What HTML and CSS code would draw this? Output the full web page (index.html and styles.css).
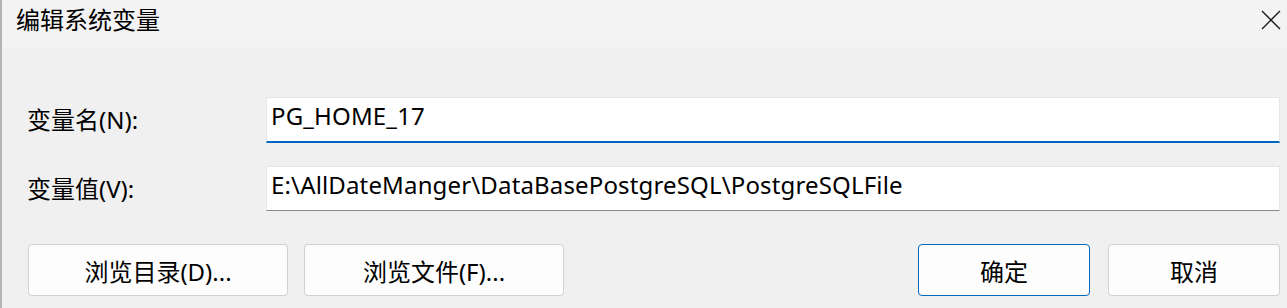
FILE: index.html
```html
<!DOCTYPE html>
<html lang="zh-CN">
<head>
    <meta charset="UTF-8">
    <meta name="viewport" content="width=device-width, initial-scale=1.0">
    <title>编辑系统变量</title>
    <link rel="stylesheet" href="styles.css">
</head>
<body>
    <div class="window">
        <div class="titlebar">
            <span class="title">编辑系统变量</span>
            <svg class="close" width="20" height="20" viewBox="0 0 20 20">
                <path d="M1 1 L19 19 M19 1 L1 19" stroke="#1a1a1a" stroke-width="1.4" fill="none"/>
            </svg>
        </div>

        <div class="content">
            <div class="fields">
                <label class="label" for="varName">变量名(N):</label>
                <input class="field focused" id="varName" type="text" value="PG_HOME_17">

                <label class="label" for="varValue">变量值(V):</label>
                <input class="field" id="varValue" type="text" value="E:\AllDateManger\DataBasePostgreSQL\PostgreSQLFile">
            </div>

            <div class="actions">
                <div class="group">
                    <button class="btn wide">浏览目录(D)...</button>
                    <button class="btn wide">浏览文件(F)...</button>
                </div>
                <div class="group right">
                    <button class="btn primary">确定</button>
                    <button class="btn">取消</button>
                </div>
            </div>
        </div>
    </div>
</body>
</html>
```

FILE: styles.css
```css
html, body {
    margin: 0;
    padding: 0;
    background: #f0f0f0;
}
body {
    font-family: "Noto Sans", "Noto Sans CJK SC", sans-serif;
    font-size: 24px;
    color: #000;
    width: 1287px;
    height: 308px;
    overflow: hidden;
}
.window {
    height: 308px;
    border-left: 2px solid #b4b4b4;
    box-sizing: border-box;
    display: flex;
    flex-direction: column;
}
.titlebar {
    height: 49px;
    background: #f3f3f3;
    display: flex;
    justify-content: space-between;
    align-items: flex-start;
    padding: 4px 6px 0 14px;
    box-sizing: border-box;
}
.title {
    font-size: 24px;
    line-height: 32px;
}
.close {
    margin-top: 6px;
}
.content {
    padding: 48px 7px 0 25px;
}
.fields {
    display: grid;
    grid-template-columns: 239px 1fr;
    row-gap: 23px;
    align-items: center;
}
.label {
    line-height: 30px;
}
.field {
    font: inherit;
    letter-spacing: 0.15px;
    color: #000;
    background: #fff;
    border: 1px solid #e6e6e6;
    border-bottom: 1px solid #8a8a8a;
    border-radius: 0;
    height: 45px;
    padding: 0 4px 8px 4px;
    box-sizing: border-box;
    outline: none;
}
.field.focused {
    height: 46px;
    border-bottom: 2px solid #0067c0;
}
.actions {
    display: flex;
    justify-content: space-between;
    margin-top: 33px;
    padding-left: 1px;
}
.group {
    display: flex;
    gap: 16px;
}
.group.right {
    gap: 18px;
}
.btn {
    font: inherit;
    color: #000;
    background: #fdfdfd;
    border: 1px solid #d0d0d0;
    border-radius: 4px;
    height: 52px;
    width: 172px;
    padding: 0;
    cursor: pointer;
}
.btn.wide {
    width: 260px;
}
.btn.primary {
    border-color: #0067c0;
}
```
